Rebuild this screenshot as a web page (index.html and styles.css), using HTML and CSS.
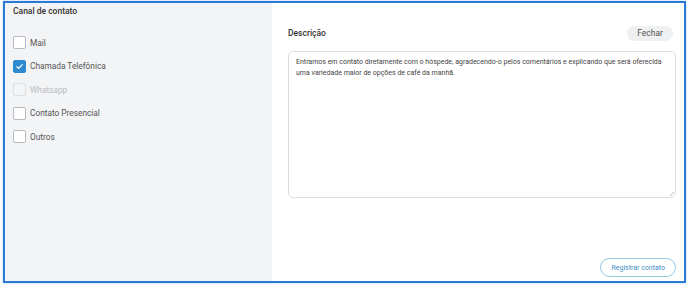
FILE: index.html
```html
<!DOCTYPE html>
<html lang="pt">
<head>
<meta charset="utf-8">
<link rel="stylesheet" href="styles.css">
</head>
<body>
<div class="frame">
  <aside class="side">
    <div class="side-title">Canal de contato</div>
    <ul class="options">
      <li class="opt"><span class="box"></span>Mail</li>
      <li class="opt"><span class="box checked"><svg viewBox="0 0 12 12" width="9" height="9"><path d="M2.5 6.2 L5 8.6 L9.6 3.6" fill="none" stroke="#fff" stroke-width="1.6" stroke-linecap="round" stroke-linejoin="round"/></svg></span>Chamada Telefônica</li>
      <li class="opt disabled"><span class="box"></span>Whatsapp</li>
      <li class="opt"><span class="box"></span>Contato Presencial</li>
      <li class="opt"><span class="box"></span>Outros</li>
    </ul>
  </aside>
  <main class="main">
    <div class="head">
      <span class="label">Descrição</span>
      <button class="close">Fechar</button>
    </div>
    <div class="textarea">Entramos em contato diretamente com o hóspede, agradecendo-o pelos comentários e explicando que será oferecida uma variedade maior de opções de café da manhã.<span class="grip"></span></div>
    <div class="foot">
      <button class="submit">Registrar contato</button>
    </div>
  </main>
</div>
</body>
</html>
```
FILE: styles.css
```css
* { box-sizing: border-box; }
html, body { margin: 0; padding: 0; background: #fff; }
body {
  font-family: Roboto, "Noto Sans", sans-serif;
  color: #333;
  width: 688px;
  height: 285px;
  overflow: hidden;
}
.frame {
  margin: 1px 0 0 3px;
  width: 683px;
  height: 282px;
  border: 2px solid #2c7ad3;
  box-shadow: 0 0 2px rgba(60, 140, 230, 0.45);
  display: flex;
  background: #fff;
}
.side {
  width: 267px;
  background: #f3f4f6;
  padding: 2px 8px 0 8px;
}
.side-title {
  font-size: 8.5px;
  font-weight: 500;
  color: #333;
  line-height: 12px;
}
.options {
  list-style: none;
  margin: 19px 0 0 0;
  padding: 0;
  display: flex;
  flex-direction: column;
  gap: 10.6px;
}
.opt {
  display: flex;
  align-items: center;
  gap: 4px;
  font-size: 8.3px;
  color: #555;
  height: 13px;
}
.opt.disabled { color: #b9bcc1; }
.box {
  width: 13px;
  height: 13px;
  border: 1px solid #b7bbc1;
  border-radius: 2px;
  background: #fff;
  display: flex;
  align-items: center;
  justify-content: center;
}
.opt.disabled .box { border-color: #dcdee1; background: #f3f4f6; }
.box.checked { background: #2d8ad1; border-color: #2d8ad1; }
.main {
  flex: 1;
  padding: 22px 8px 4px 16px;
  display: flex;
  flex-direction: column;
}
.head {
  display: flex;
  justify-content: space-between;
  align-items: center;
  height: 16px;
  margin-bottom: 10px;
}
.label {
  font-size: 8.5px;
  font-weight: 500;
  color: #333;
}
.close {
  font-family: inherit;
  font-size: 8.5px;
  color: #555;
  background: #eff0f2;
  border: none;
  border-radius: 8px;
  padding: 0 10px;
  margin-right: 3px;
  height: 15px;
  line-height: 15px;
}
.textarea {
  position: relative;
  height: 147px;
  border: 1px solid #dcdee1;
  border-radius: 5px;
  padding: 5px 7px;
  font-size: 7px;
  line-height: 11px;
  color: #444;
}
.grip {
  position: absolute;
  right: 1px;
  bottom: 1px;
  width: 5px;
  height: 5px;
  background: linear-gradient(135deg, transparent 50%, #bbb 50%, #bbb 62%, transparent 62%);
}
.foot {
  margin-top: auto;
  display: flex;
  justify-content: flex-end;
}
.submit {
  font-family: inherit;
  font-size: 7px;
  color: #3b8fc2;
  background: #fff;
  border: 1px solid #95c8e3;
  border-radius: 10px;
  height: 19px;
  padding: 0 10px;
}
```
